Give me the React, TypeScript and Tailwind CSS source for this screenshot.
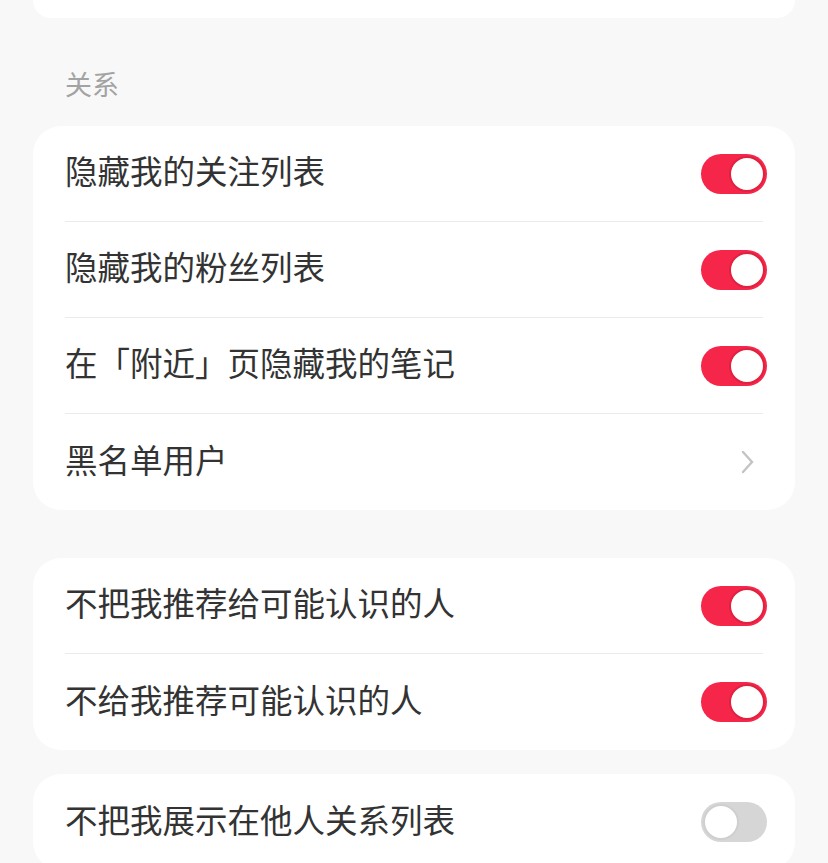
import React from "react";

type Row = {label: string; kind: "on" | "off" | "link"};

const groupOne: Row[] = [
  {label: "隐藏我的关注列表", kind: "on"},
  {label: "隐藏我的粉丝列表", kind: "on"},
  {label: "在「附近」页隐藏我的笔记", kind: "on"},
  {label: "黑名单用户", kind: "link"},
];

const groupTwo: Row[] = [
  {label: "不把我推荐给可能认识的人", kind: "on"},
  {label: "不给我推荐可能认识的人", kind: "on"},
];

const groupThree: Row[] = [{label: "不把我展示在他人关系列表", kind: "off"}];

const Toggle: React.FC<{on: boolean}> = ({on}) => (
  <div
    className={
      on
        ? "flex h-[40px] w-[66px] items-center justify-end rounded-full bg-[#f5264a] p-[2px]"
        : "flex h-[40px] w-[66px] items-center justify-start rounded-full bg-[#d6d6d6] p-[2px]"
    }
  >
    <div
      className={
        on
          ? "h-[36px] w-[36px] rounded-full border-2 border-[#e0213f] bg-white"
          : "h-[36px] w-[36px] rounded-full border-2 border-[#cfcfcf] bg-white"
      }
    />
  </div>
);

const Chevron = () => (
  <svg className="mr-[12px]" fill="none" height="24" viewBox="0 0 14 24" width="14">
    <path d="M2 2l9 10-9 10" stroke="#c4c4c4" strokeLinecap="round" strokeWidth="2.4" />
  </svg>
);

const Card: React.FC<{rows: Row[]; className?: string}> = ({rows, className}) => (
  <div className={`mx-[33px] rounded-[28px] bg-white px-[32px] ${className ?? ""}`}>
    {rows.map((row, index) => (
      <div
        key={row.label}
        className={`flex h-[96px] items-center justify-between ${
          index < rows.length - 1 ? "border-b border-[#ebebeb]" : ""
        }`}
      >
        <p className="mb-[6px] text-[32.5px] leading-none text-[#333333]">{row.label}</p>
        <div className="-mr-[4px]">
          {row.kind === "link" ? <Chevron /> : <Toggle on={row.kind === "on"} />}
        </div>
      </div>
    ))}
  </div>
);

export default function App() {
  return (
    <div
      className="h-[863px] w-[828px] overflow-hidden bg-[#f8f8f8]"
      style={{fontFamily: '"Noto Sans CJK SC", "Noto Sans", sans-serif'}}
    >
      <div className="mx-[33px] h-[18px] rounded-b-[28px] bg-white" />
      <div className="px-[65px] pb-[21px] pt-[47px]">
        <p className="mb-[2px] text-[27px] leading-[38px] text-[#a3a3a3]">关系</p>
      </div>
      <Card rows={groupOne} />
      <Card className="mt-[48px]" rows={groupTwo} />
      <Card className="mt-[24px]" rows={groupThree} />
    </div>
  );
}
